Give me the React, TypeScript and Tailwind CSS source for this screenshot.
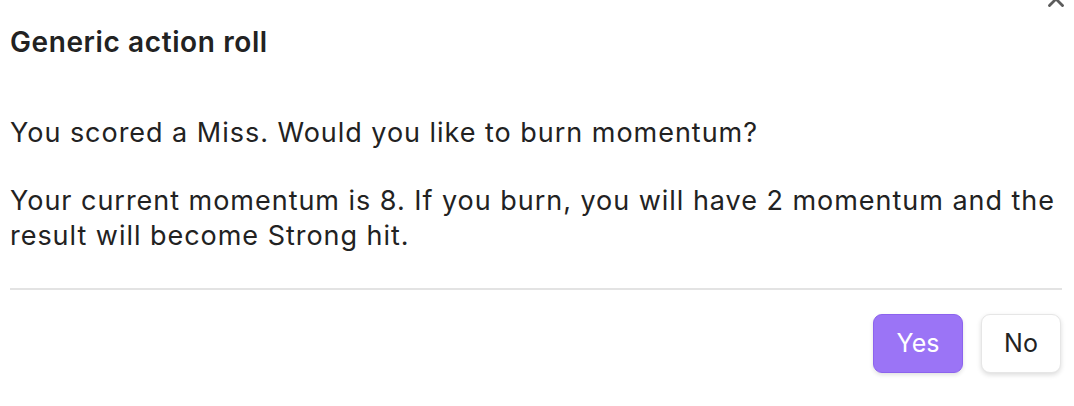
import React from "react";

export default function App() {
  return (
    <div className="relative w-[1074px] h-[406px] bg-white overflow-hidden text-[#222222]" style={{ fontFamily: "Inter, 'Noto Sans', sans-serif" }}>
      <button className="absolute right-[5px] top-[-14px] w-[26px] h-[26px] flex items-center justify-center text-[#5c5c5c]">
        <svg width="26" height="26" viewBox="0 0 24 24" fill="none" stroke="currentColor" strokeWidth="2.6" strokeLinecap="round" strokeLinejoin="round">
          <path d="M18 6 6 18" />
          <path d="m6 6 12 12" />
        </svg>
      </button>
      <div className="pl-[10px] pr-[12px] pt-[24px]">
        <h1 className="text-[28px] leading-[36px] font-semibold tracking-[0.6px]">Generic action roll</h1>
        <div className="mt-[55px] text-[27px] leading-[35px] tracking-[0.97px]">
          <p>You scored a Miss. Would you like to burn momentum?</p>
          <p className="mt-[33px]">Your current momentum is 8. If you burn, you will have 2 momentum and the result will become Strong hit.</p>
        </div>
        <div className="mt-[35px] h-[2px] bg-[#e3e3e3]" />
        <div className="mt-[24px] flex justify-end gap-[18px] pr-[1px]">
          <button className="w-[90px] h-[59px] rounded-[9px] bg-[#9b74f6] border border-[#8c63ee] text-white text-[25px] shadow-[0_2px_4px_rgba(0,0,0,0.12)]">Yes</button>
          <button className="w-[80px] h-[59px] rounded-[9px] bg-white border border-[#e6e6e6] text-[#222222] text-[25px] shadow-[0_2px_5px_rgba(0,0,0,0.14)]">No</button>
        </div>
      </div>
    </div>
  );
}
